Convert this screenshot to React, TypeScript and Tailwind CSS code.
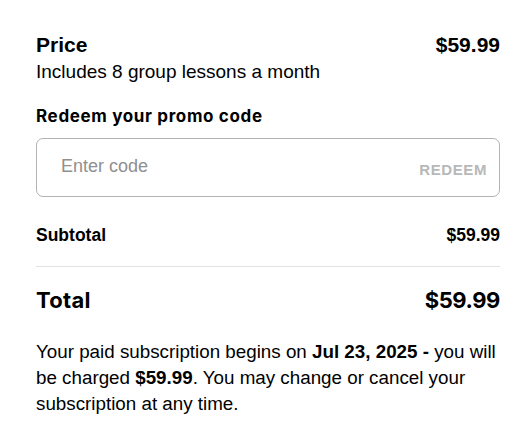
import React from "react";

export default function App() {
  return (
    <div className="w-[522px] h-[432px] bg-white text-black" style={{ fontFamily: '"Liberation Sans", Arial, sans-serif' }}>
      <div className="pl-[36px] pr-[22px] pt-[32px]">
        <div className="flex justify-between items-center h-[26px]">
          <div className="text-[21px] font-bold leading-[26px]">Price</div>
          <div className="text-[21px] font-bold leading-[26px]">$59.99</div>
        </div>
        <div className="mt-[2px] text-[19px] leading-[24px]">Includes 8 group lessons a month</div>
        <div className="mt-[20px] text-[17px] font-bold leading-[24px] tracking-[0.65px] font-['Inter',sans-serif]">Redeem your promo code</div>
        <div className="mt-[10px] h-[59px] border border-[#b3b3b3] rounded-[7px] flex items-center justify-between pl-[24px] pr-[12px]">
          <span className="text-[18px] leading-[24px] text-[#8f8f8f] mt-[-3px]">Enter code</span>
          <span className="text-[15px] leading-[20px] font-bold tracking-[0.6px] text-[#b8b8b8] mt-[5px]">REDEEM</span>
        </div>
        <div className="mt-[26px] flex justify-between items-center h-[24px]">
          <span className="text-[17.5px] font-bold leading-[24px]">Subtotal</span>
          <span className="text-[17.5px] font-bold leading-[24px]">$59.99</span>
        </div>
        <div className="mt-[19px] border-t border-[#e3e3e3]" />
        <div className="mt-[18px] flex justify-between items-center h-[30px] font-['Inter',sans-serif]">
          <span className="text-[22px] font-bold leading-[30px] tracking-[0.3px]">Total</span>
          <span className="text-[22px] font-bold leading-[30px] tracking-[-0.4px]">$59.99</span>
        </div>
        <p className="mt-[24px] mr-[-6px] text-[18.8px] leading-[26px]">
          Your paid subscription begins on <b>Jul 23, 2025 -</b> you will be charged <b>$59.99</b>. You may change or cancel your subscription at any time.
        </p>
      </div>
    </div>
  );
}
